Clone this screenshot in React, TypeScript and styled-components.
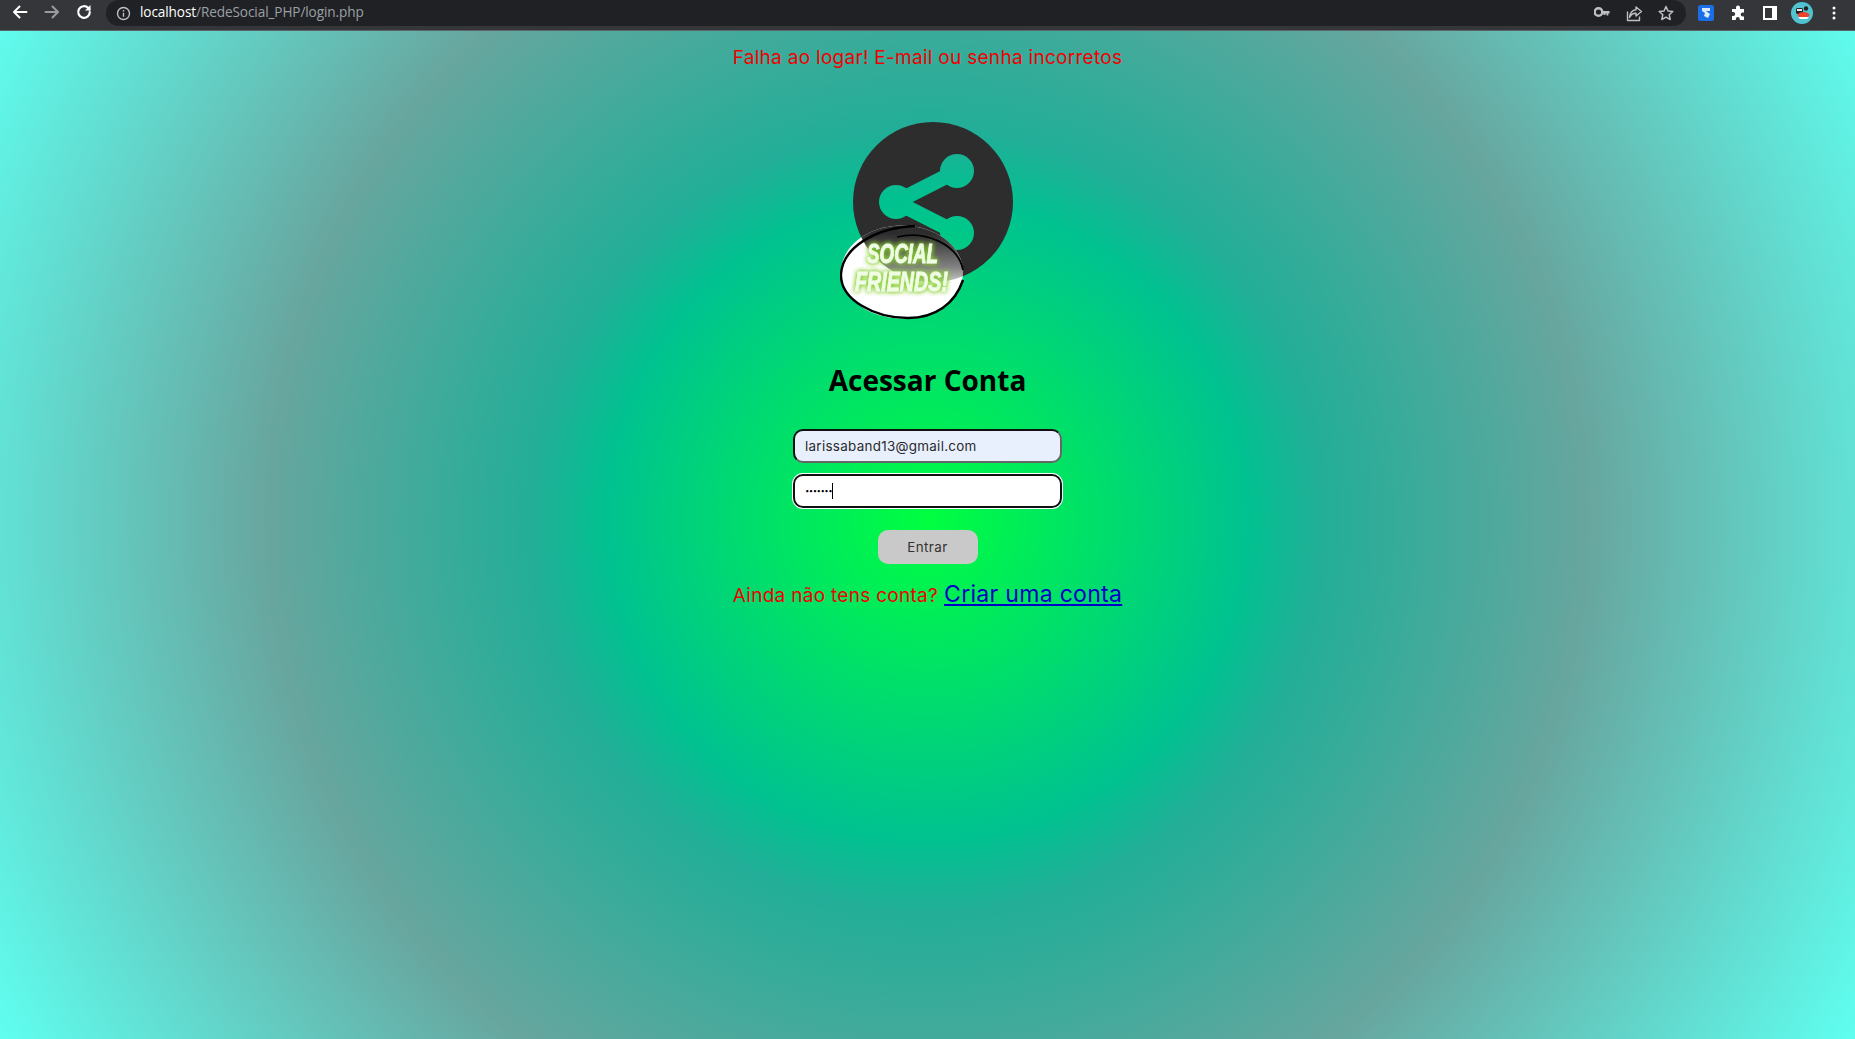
import React from "react";
import styled, { createGlobalStyle } from "styled-components";

const Global = createGlobalStyle`
  html, body { margin: 0; padding: 0; }
  body { font-family: "Inter", "Liberation Sans", sans-serif; overflow: hidden; }
`;

const Shell = styled.div`
  width: 1855px;
  height: 1039px;
  display: flex;
  flex-direction: column;
  overflow: hidden;
`;

const Toolbar = styled.header`
  height: 30px;
  flex: none;
  display: flex;
  align-items: flex-start;
  padding-left: 4px;
  background: #35363a;
  border-bottom: 1px solid #5b6468;
  box-sizing: content-box;
`;

const NavButton = styled.span<{ $muted?: boolean }>`
  width: 32px;
  height: 24px;
  display: flex;
  align-items: center;
  justify-content: center;
  flex: none;
  opacity: ${(p) => (p.$muted ? 0.5 : 1)};
`;

const AddressBar = styled.div`
  width: 1580px;
  height: 26px;
  margin-left: 6px;
  flex: none;
  display: flex;
  align-items: center;
  background: #202124;
  border-radius: 13px;
  padding: 0 4px 0 10px;
  box-sizing: border-box;
`;

const Url = styled.span`
  margin-left: 9px;
  padding-bottom: 3px;
  font-family: "Open Sans", "Liberation Sans", sans-serif;
  font-size: 13.6px;
  letter-spacing: -0.1px;
  color: #9aa0a6;
  flex: 1;
`;

const Host = styled.span`
  color: #ffffff;
`;

const BarIcon = styled.span`
  width: 32px;
  display: flex;
  align-items: center;
  justify-content: center;
  flex: none;
`;

const Extensions = styled.div`
  display: flex;
  align-items: center;
  margin-left: 4px;
`;

const ExtIcon = styled.span`
  width: 32px;
  height: 26px;
  display: flex;
  align-items: center;
  justify-content: center;
`;

const Page = styled.main`
  flex: 1;
  display: flex;
  flex-direction: column;
  align-items: center;
  background: radial-gradient(circle at 50% 48.5%, #00ff40 0%, #00c290 30%, #22ae98 37%, #67a69f 62%, #5ffff0 100%);
`;

const ErrorText = styled.p`
  margin: 15px 0 0;
  font-size: 19px;
  line-height: 24px;
  letter-spacing: 0.29px;
  color: #f00000;
`;

const LogoImage = styled.svg`
  display: block;
  margin: 52px 0 0 10px;
`;

const Title = styled.h1`
  margin: 39px 0 0;
  font-family: "Open Sans", "Liberation Sans", sans-serif;
  font-size: 28px;
  line-height: 38px;
  font-weight: 700;
  color: #000;
`;

const Form = styled.form`
  display: flex;
  flex-direction: column;
  align-items: center;
  margin-top: 30px;
`;

const Field = styled.div`
  position: relative;
  & + & {
    margin-top: 11px;
  }
`;

const TextInput = styled.input<{ $focused?: boolean }>`
  display: block;
  width: 269px;
  height: 34px;
  box-sizing: border-box;
  padding: 0 10px;
  font-family: "Inter", "Liberation Sans", sans-serif;
  font-size: 13.4px;
  letter-spacing: 0.3px;
  color: #2a2a2a;
  border-radius: 10px;
  outline: none;
  border-width: 2px;
  border-style: solid;
  ${(p) =>
    p.$focused
      ? `background:#fff; border-color:#111; box-shadow:0 0 0 1px #fff; color:#000; letter-spacing:-0.6px; font-weight:700;`
      : `background:#e8f0fe; border-color:#111 #666 #666 #111;`}
`;

const Caret = styled.span`
  position: absolute;
  left: 39px;
  top: 9px;
  width: 1px;
  height: 16px;
  background: #000;
`;

const SubmitButton = styled.button`
  margin-top: 22px;
  width: 100px;
  height: 34px;
  border: none;
  border-radius: 10px;
  background: #c9c9c9;
  color: #333;
  font-family: "Inter", "Liberation Sans", sans-serif;
  font-size: 13.4px;
  letter-spacing: 0.4px;
`;

const SignupLine = styled.p`
  margin: 13px 0 0;
  display: flex;
  align-items: baseline;
  gap: 6px;
  line-height: 34px;
  font-size: 19px;
  letter-spacing: 0.29px;
  color: #f00000;
`;

const SignupLink = styled.a`
  font-size: 23px;
  letter-spacing: 0.3px;
  color: #0000c8;
  text-decoration: underline;
`;

const icon = { fill: "none", stroke: "#fff", strokeWidth: 2, strokeLinecap: "round", strokeLinejoin: "round" } as const;
const gray = { fill: "none", stroke: "#bdc1c6", strokeWidth: 1.4, strokeLinejoin: "round" } as const;

const Logo = () => (
  <LogoImage width="186" height="200" viewBox="0 0 186 200" role="img" aria-label="Social Friends">
    <defs>
      <filter id="glow" x="-30%" y="-40%" width="160%" height="180%">
        <feGaussianBlur in="SourceAlpha" stdDeviation="2.800" result="blur" />
        <feFlood floodColor="#86cf2c" result="color" />
        <feComposite in="color" in2="blur" operator="in" result="halo" />
        <feMerge>
          <feMergeNode in="halo" />
          <feMergeNode in="halo" />
          <feMergeNode in="SourceGraphic" />
        </feMerge>
      </filter>
      <linearGradient id="shade" gradientUnits="userSpaceOnUse" x1="0" y1="112" x2="0" y2="172">
        <stop offset="0%" stopColor="#2d2d2d" stopOpacity="1" />
        <stop offset="55%" stopColor="#2d2d2d" stopOpacity="0.6" />
        <stop offset="100%" stopColor="#2d2d2d" stopOpacity="0" />
      </linearGradient>
      <clipPath id="blobClip">
        <ellipse cx="62" cy="150" rx="61" ry="46.500" />
      </clipPath>
      <mask id="shareCut">
        <rect width="186" height="200" fill="#fff" />
        <circle cx="117" cy="49" r="17" fill="#000" />
        <circle cx="56" cy="80" r="17" fill="#000" />
        <circle cx="117" cy="111" r="17" fill="#000" />
        <path d="M117 49 L56 80 L117 111" fill="none" stroke="#000" strokeWidth="15" strokeLinejoin="miter" />
      </mask>
    </defs>
    <circle cx="93" cy="80" r="80" fill="#2d2d2d" mask="url(#shareCut)" />
    <ellipse cx="62" cy="150" rx="61" ry="46.500" fill="#fff" />
    <circle cx="93" cy="80" r="80" fill="url(#shade)" clipPath="url(#blobClip)" />
    <path d="M75 104 C 35 106 3 125 1 152 C 0 178 35 196 68 196 C 95 196 115 182 123 158" fill="none" stroke="#000" strokeWidth="2.400" />
    <path d="M57 115 C 85 108 118 122 123 148" fill="none" stroke="#000" strokeWidth="1.800" />
    <text
      x="62.500" y="141" textAnchor="middle" textLength="71" lengthAdjust="spacingAndGlyphs"
      fontFamily="'Liberation Sans Narrow', 'Liberation Sans', sans-serif" fontWeight="700" fontStyle="italic" fontSize="27"
      fill="#f0fde2" stroke="#f0fde2" strokeWidth="0.800" filter="url(#glow)"
    >SOCIAL</text>
    <text
      x="61.500" y="168.500" textAnchor="middle" textLength="93" lengthAdjust="spacingAndGlyphs"
      fontFamily="'Liberation Sans Narrow', 'Liberation Sans', sans-serif" fontWeight="700" fontStyle="italic" fontSize="27"
      fill="#f0fde2" stroke="#f0fde2" strokeWidth="0.800" filter="url(#glow)"
    >FRIENDS!</text>
  </LogoImage>
);

export default function App() {
  return (
    <Shell>
      <Global />
      <Toolbar>
        <NavButton>
          <svg width="18" height="18" viewBox="0 0 18 18" {...icon}><path d="M15.500 9H3M8.500 3.500 3 9l5.500 5.500" /></svg>
        </NavButton>
        <NavButton $muted>
          <svg width="18" height="18" viewBox="0 0 18 18" {...icon}><path d="M2.500 9H15M9.500 3.500 15 9l-5.500 5.500" /></svg>
        </NavButton>
        <NavButton>
          <svg width="18" height="18" viewBox="0 0 18 18" {...icon} strokeWidth={2.200}><path d="M14.800 9a5.800 5.800 0 1 1-1.700-4.100L14.500 6.500" /><path d="M15.500 2v5.500H10z" fill="#fff" stroke="none" /></svg>
        </NavButton>
        <AddressBar>
          <svg width="15" height="15" viewBox="0 0 15 15" fill="none" stroke="#bdc1c6" strokeWidth="1.400"><circle cx="7.500" cy="7.500" r="6" /><path d="M7.500 6.800v4M7.500 4v1.500" /></svg>
          <Url><Host>localhost</Host>/RedeSocial_PHP/login.php</Url>
          <BarIcon>
            <svg width="16" height="16" viewBox="0 0 16 16"><circle cx="4.500" cy="7" r="3.800" fill="none" stroke="#bdc1c6" strokeWidth="2.400" /><path d="M8 6h7.500v2.500h-1.200v2h-1.800v-2h-1v1.500H9.500V8.500H8z" fill="#bdc1c6" /></svg>
          </BarIcon>
          <BarIcon>
            <svg width="17" height="17" viewBox="0 0 17 17" {...gray}><path d="M1.500 6.500v9h12v-4" /><path d="M10 2l5.500 4.500L10 11V8.300C7 8 5 9.500 3.500 12.500 4 8 6.500 5 10 4.700z" /></svg>
          </BarIcon>
          <BarIcon>
            <svg width="16" height="16" viewBox="0 0 16 16" {...gray} strokeWidth={1.500}><path d="M8 1.500l2 4.500 4.800.500-3.600 3.200 1 4.800L8 12.100 3.800 14.500l1-4.800L1.200 6.500 6 6z" /></svg>
          </BarIcon>
        </AddressBar>
        <Extensions>
          <ExtIcon>
            <svg width="16" height="16" viewBox="0 0 16 16"><rect width="16" height="16" rx="2.500" fill="#1a6fe8" /><path d="M4 3h8v3H8l4 3-2 4-4-2 1-3-3-2z" fill="#dbe9fb" /></svg>
          </ExtIcon>
          <ExtIcon>
            <svg width="16" height="16" viewBox="0 0 16 16"><path d="M6 2.500a2 2 0 0 1 4 0V4h4v3.500h-1.300a2 2 0 0 0 0 4H14V15H9.800v-1a2 2 0 0 0-4 0v1H2v-4h1.200a2 2 0 0 0 0-4H2V4h4z" fill="#fff" /></svg>
          </ExtIcon>
          <ExtIcon>
            <svg width="14" height="14" viewBox="0 0 14 14"><path d="M0 0h14v14H0z" fill="#fff" /><path d="M2 2h7v10H2z" fill="#35363a" /></svg>
          </ExtIcon>
          <ExtIcon>
            <svg width="22" height="22" viewBox="0 0 22 22"><circle cx="11" cy="11" r="11" fill="#4fc3d0" /><rect x="5" y="6" width="7" height="6" rx="1.500" fill="#222" /><rect x="6" y="7" width="5" height="2" fill="#e8e8e8" /><ellipse cx="12.500" cy="13" rx="6" ry="3" fill="#e8442e" /><path d="M7 15h11l-2 2H9z" fill="#fff" /><circle cx="15" cy="6.500" r="2.200" fill="#222" /></svg>
          </ExtIcon>
          <ExtIcon>
            <svg width="4" height="14" viewBox="0 0 4 14" fill="#fff"><circle cx="2" cy="2" r="1.500" /><circle cx="2" cy="7" r="1.500" /><circle cx="2" cy="12" r="1.500" /></svg>
          </ExtIcon>
        </Extensions>
      </Toolbar>
      <Page>
        <ErrorText>Falha ao logar! E-mail ou senha incorretos</ErrorText>
        <Logo />
        <Title>Acessar Conta</Title>
        <Form>
          <Field>
            <TextInput type="text" readOnly value="larissaband13@gmail.com" />
          </Field>
          <Field>
            <TextInput $focused type="text" readOnly value="·······" />
            <Caret />
          </Field>
          <SubmitButton type="button">Entrar</SubmitButton>
        </Form>
        <SignupLine>
          Ainda não tens conta?
          <SignupLink href="#">Criar uma conta</SignupLink>
        </SignupLine>
      </Page>
    </Shell>
  );
}
